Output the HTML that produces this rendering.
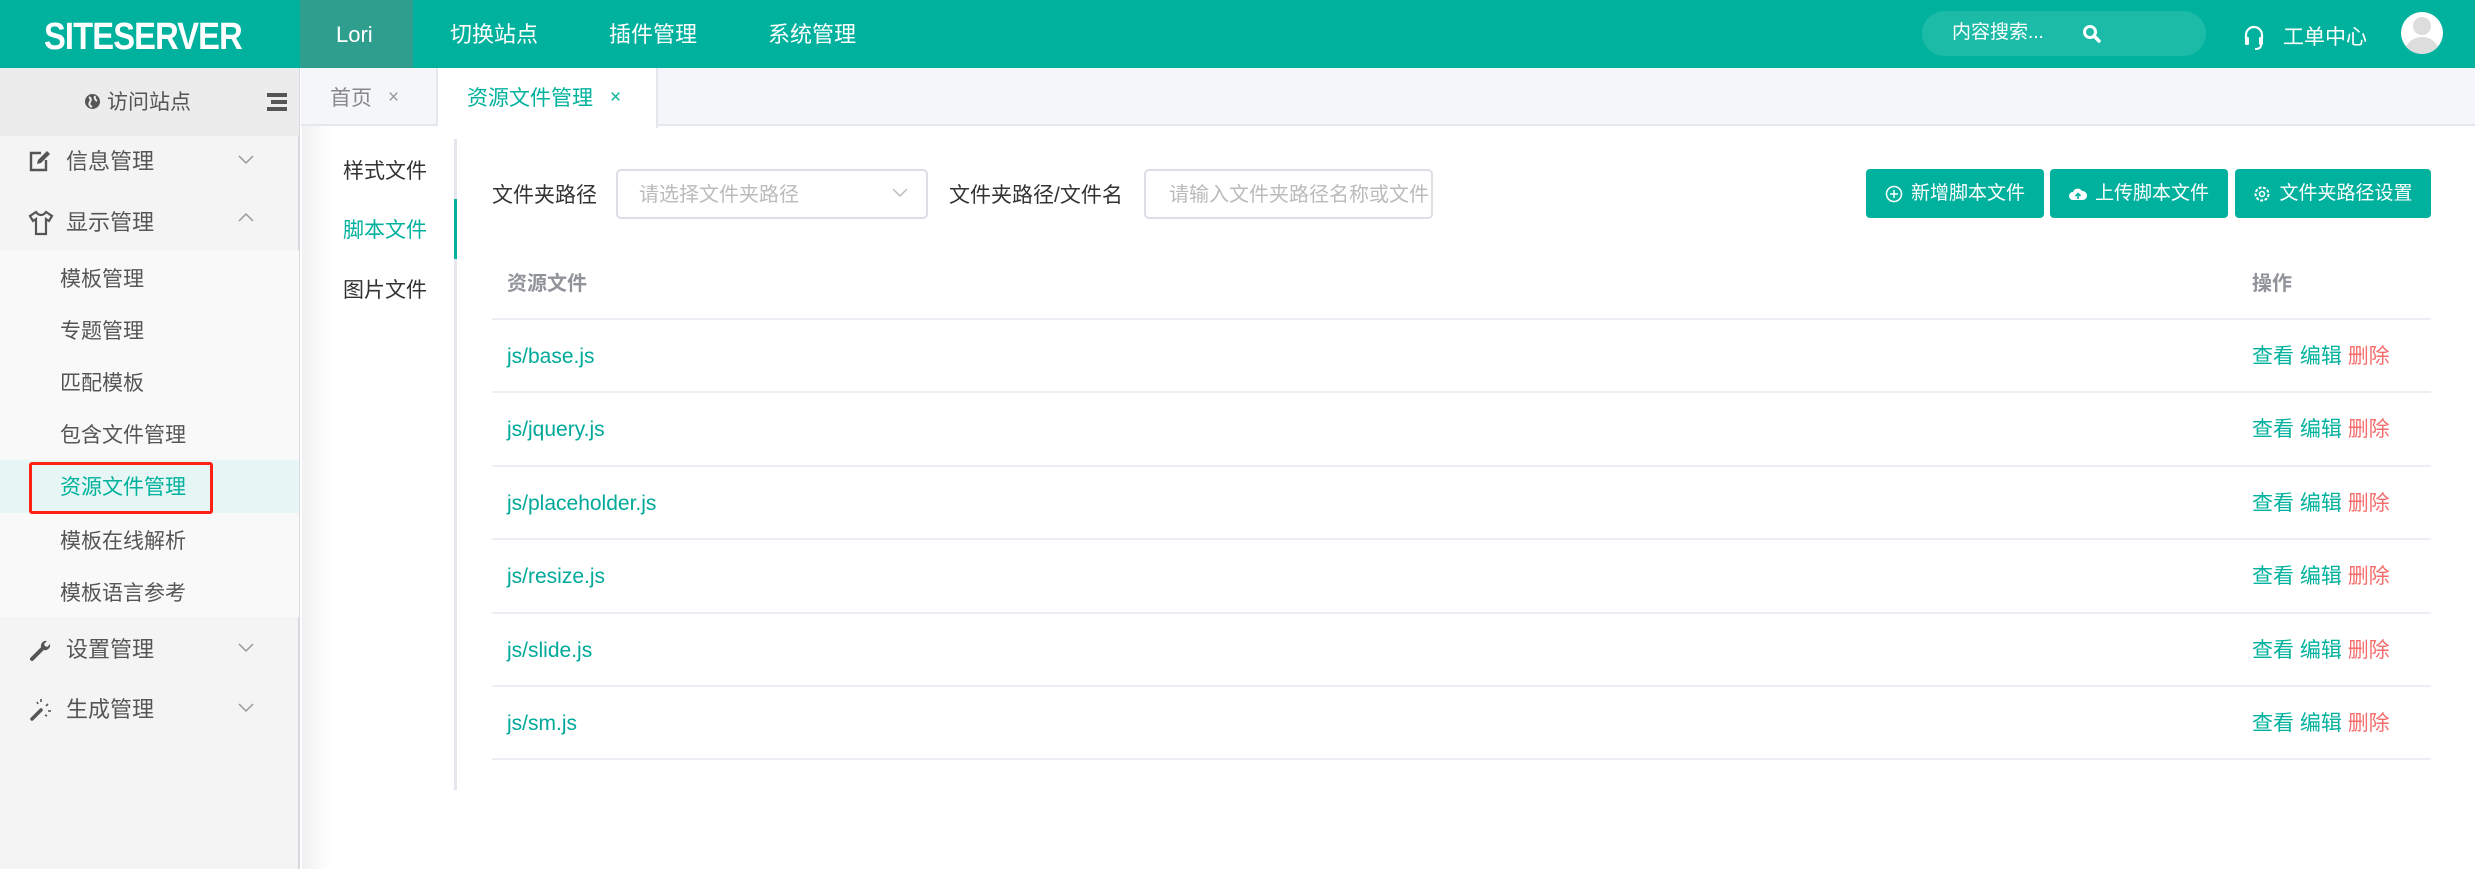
<!DOCTYPE html>
<html><head><meta charset="utf-8">
<style>
*{margin:0;padding:0;box-sizing:border-box}
body{width:2475px;height:869px;overflow:hidden;font-family:"Liberation Sans","Noto Sans CJK SC",sans-serif;background:#fff;position:relative;color:#333;line-height:30px}
.abs{position:absolute}
.hdr{left:0;top:0;width:2475px;height:68px;background:#00b19d}
.ht{color:#fff;font-size:22px;top:20px}
.side{left:0;top:68px;width:300px;height:801px;background:#f4f4f4;border-right:2px solid #d6d9e0}
.mi{font-size:22px;color:#555}
.sub{left:0;top:250px;width:299px;height:367px;background:#f9f9f9}
.tabs{left:301px;top:68px;width:2174px;height:58px;background:#f5f6fa;border-bottom:2px solid #e4e7ed}
.g{color:#00b19d}
.btn{top:169px;height:49px;background:#00b19d;border-radius:4px;color:#fff;font-size:19px;display:flex;align-items:center;justify-content:center;gap:8px;line-height:26px}
.row{left:492px;width:1939px;height:2px;background:#ebeef5}
.fn{left:507px;font-size:21px;color:#00a99a}
.op{left:2252px;font-size:21px}
</style></head><body>
<div class="abs hdr"></div>
<div class="abs" style="left:44px;top:17px;color:#fff;font-size:38px;line-height:40px;font-weight:bold;letter-spacing:-1px;transform:scaleX(0.86);transform-origin:left">SITESERVER</div>
<div class="abs" style="left:300px;top:0;width:113px;height:68px;background:#2f9e8f"></div>
<div class="abs ht" style="left:336px">Lori</div>
<div class="abs ht" style="left:450px">切换站点</div>
<div class="abs ht" style="left:609px">插件管理</div>
<div class="abs ht" style="left:768px">系统管理</div>
<div class="abs" style="left:1922px;top:11px;width:284px;height:45px;border-radius:23px;background:#1cbba8"></div>
<div class="abs" style="left:1952px;top:18px;color:#fff;font-size:19px">内容搜索...</div>
<svg class="abs" style="left:2082px;top:24px" width="20" height="20" viewBox="0 0 20 20"><circle cx="8" cy="8" r="5.5" stroke="#fff" stroke-width="3" fill="none"/><path d="M12 12l5 5" stroke="#fff" stroke-width="3.5" stroke-linecap="round"/></svg>
<svg class="abs" style="left:2243px;top:25px" width="22" height="26" viewBox="0 0 22 26"><path d="M3 14V10a8 8 0 0116 0v4" stroke="#fff" stroke-width="2.2" fill="none"/><rect x="2" y="12" width="4" height="8" rx="1.5" fill="#fff"/><rect x="16" y="12" width="4" height="8" rx="1.5" fill="#fff"/><path d="M18 20q0 4-6 4" stroke="#fff" stroke-width="2" fill="none"/></svg>
<div class="abs" style="left:2283px;top:23px;color:#fff;font-size:21px">工单中心</div>
<div class="abs" style="left:2401px;top:12px;width:42px;height:42px;border-radius:50%;background:#fff;overflow:hidden"><div class="abs" style="left:12px;top:5px;width:18px;height:18px;border-radius:50%;background:#ddd"></div><div class="abs" style="left:4px;top:25px;width:34px;height:30px;border-radius:50%;background:#ddd"></div></div>

<div class="abs side"></div>
<div class="abs" style="left:0;top:68px;width:299px;height:68px;background:#ececec"></div>
<svg class="abs" style="left:84px;top:93px" width="17" height="17" viewBox="0 0 17 17"><circle cx="8.5" cy="8.5" r="7.5" fill="#555"/><path d="M5 4q3 2 1 5t2 5M11 3q-1 3 2 5" stroke="#ececec" stroke-width="2" fill="none"/></svg>
<div class="abs mi" style="left:107px;top:88px;font-size:21px">访问站点</div>
<div class="abs" style="left:267px;top:93px;width:20px;height:4px;background:#555"></div>
<div class="abs" style="left:271px;top:100px;width:16px;height:4px;background:#555"></div>
<div class="abs" style="left:267px;top:107px;width:20px;height:4px;background:#555"></div>
<svg class="abs" style="left:29px;top:150px" width="22" height="22" viewBox="0 0 22 22"><path d="M12 3H2v17h15V10" stroke="#555" stroke-width="2.4" fill="none"/><path d="M8 14l1-4 9-9 3 3-9 9z" fill="#555"/></svg>
<div class="abs mi" style="left:66px;top:147px">信息管理</div>
<svg class="abs" style="left:238px;top:155px" width="16" height="10"><path d="M1 1l7 7 7-7" stroke="#999" stroke-width="1.5" fill="none"/></svg>
<svg class="abs" style="left:28px;top:210px" width="26" height="26" viewBox="0 0 26 26"><path d="M8 2l-6 4 3 5 3-2v15h10V9l3 2 3-5-6-4q-2 3-5 3t-5-3z" stroke="#555" stroke-width="2.2" fill="none"/></svg>
<div class="abs mi" style="left:66px;top:208px">显示管理</div>
<svg class="abs" style="left:238px;top:212px" width="16" height="10"><path d="M1 9l7-7 7 7" stroke="#999" stroke-width="1.5" fill="none"/></svg>
<div class="abs sub"></div>
<div class="abs" style="left:0;top:460px;width:299px;height:53px;background:#e6f6f4"></div>
<div class="abs mi" style="left:60px;top:265px;font-size:21px">模板管理</div>
<div class="abs mi" style="left:60px;top:317px;font-size:21px">专题管理</div>
<div class="abs mi" style="left:60px;top:369px;font-size:21px">匹配模板</div>
<div class="abs mi" style="left:60px;top:421px;font-size:21px">包含文件管理</div>
<div class="abs g" style="left:60px;top:473px;font-size:21px">资源文件管理</div>
<div class="abs" style="left:29px;top:462px;width:184px;height:52px;border:3px solid #ff2016;border-radius:3px"></div>
<div class="abs mi" style="left:60px;top:527px;font-size:21px">模板在线解析</div>
<div class="abs mi" style="left:60px;top:579px;font-size:21px">模板语言参考</div>
<svg class="abs" style="left:29px;top:638px" width="24" height="24" viewBox="0 0 24 24"><path d="M3 21l10-10" stroke="#555" stroke-width="4" stroke-linecap="round"/><path d="M13 11a5 5 0 015-8l-3 3 1 2 2 1 3-3a5 5 0 01-8 5z" fill="#555"/></svg>
<div class="abs mi" style="left:66px;top:635px">设置管理</div>
<svg class="abs" style="left:238px;top:643px" width="16" height="10"><path d="M1 1l7 7 7-7" stroke="#999" stroke-width="1.5" fill="none"/></svg>
<svg class="abs" style="left:29px;top:698px" width="24" height="24" viewBox="0 0 24 24"><path d="M3 21l9-9" stroke="#555" stroke-width="3.5" stroke-linecap="round"/><path d="M12 1v3M19 6l-2 2M22 13h-3M8 4l1 2M18 18l-2-1" stroke="#555" stroke-width="1.6"/></svg>
<div class="abs mi" style="left:66px;top:695px">生成管理</div>
<svg class="abs" style="left:238px;top:703px" width="16" height="10"><path d="M1 1l7 7 7-7" stroke="#999" stroke-width="1.5" fill="none"/></svg>

<div class="abs" style="left:302px;top:126px;width:30px;height:743px;background:linear-gradient(to right,#f1f1f1,#fff)"></div>
<div class="abs tabs"></div>
<div class="abs" style="left:436px;top:68px;width:2px;height:58px;background:#e4e7ed"></div>
<div class="abs" style="left:438px;top:68px;width:220px;height:60px;background:#fff;border-right:2px solid #e4e7ed"></div>
<div class="abs" style="left:330px;top:84px;font-size:21px;color:#888">首页</div>
<div class="abs" style="left:388px;top:83px;font-size:19px;color:#999">×</div>
<div class="abs g" style="left:467px;top:84px;font-size:21px">资源文件管理</div>
<div class="abs g" style="left:610px;top:83px;font-size:19px">×</div>

<div class="abs" style="left:343px;top:157px;font-size:21px;color:#333">样式文件</div>
<div class="abs g" style="left:343px;top:216px;font-size:21px">脚本文件</div>
<div class="abs" style="left:343px;top:276px;font-size:21px;color:#333">图片文件</div>
<div class="abs" style="left:454px;top:139px;width:3px;height:651px;background:#e4e7ed"></div>
<div class="abs" style="left:454px;top:199px;width:3px;height:60px;background:#00b19d"></div>

<div class="abs" style="left:492px;top:181px;font-size:21px;color:#333">文件夹路径</div>
<div class="abs" style="left:616px;top:169px;width:312px;height:50px;border:2px solid #dcdfe6;border-radius:5px"></div>
<div class="abs" style="left:639px;top:180px;font-size:20px;color:#bbb">请选择文件夹路径</div>
<svg class="abs" style="left:892px;top:188px" width="16" height="10"><path d="M1 1l7 7 7-7" stroke="#bbb" stroke-width="1.5" fill="none"/></svg>
<div class="abs" style="left:949px;top:181px;font-size:21px;color:#333">文件夹路径/文件名</div>
<div class="abs" style="left:1144px;top:169px;width:289px;height:50px;border:2px solid #dcdfe6;border-radius:5px;overflow:hidden"><div style="position:absolute;left:23px;top:9px;font-size:20px;color:#bbb;white-space:nowrap">请输入文件夹路径名称或文件</div></div>

<div class="abs btn" style="left:1866px;width:178px"><svg width="18" height="18"><circle cx="9" cy="9" r="7.5" stroke="#fff" stroke-width="1.5" fill="none"/><path d="M9 5v8M5 9h8" stroke="#fff" stroke-width="1.5"/></svg>新增脚本文件</div>
<div class="abs btn" style="left:2050px;width:178px"><svg width="18" height="16"><path d="M4 14a4 4 0 010-8 5 5 0 019-1 4 4 0 011 9z" fill="#fff"/><path d="M9 13V8M6.5 10L9 7.5l2.5 2.5" stroke="#00b19d" stroke-width="1.6" fill="none"/></svg>上传脚本文件</div>
<div class="abs btn" style="left:2235px;width:196px"><svg width="18" height="18"><circle cx="9" cy="9" r="6.5" stroke="#fff" stroke-width="2" fill="none" stroke-dasharray="3 1.5"/><circle cx="9" cy="9" r="2.5" stroke="#fff" stroke-width="1.5" fill="none"/></svg>文件夹路径设置</div>

<div class="abs" style="left:507px;top:269px;font-size:20px;color:#909399;font-weight:bold">资源文件</div>
<div class="abs" style="left:2252px;top:269px;font-size:20px;color:#909399;font-weight:bold">操作</div>
<div class="abs row" style="top:318px"></div>
<div class="abs fn" style="top:342px">js/base.js</div>
<div class="abs row" style="top:391px"></div>
<div class="abs fn" style="top:415px">js/jquery.js</div>
<div class="abs row" style="top:465px"></div>
<div class="abs fn" style="top:489px">js/placeholder.js</div>
<div class="abs row" style="top:538px"></div>
<div class="abs fn" style="top:562px">js/resize.js</div>
<div class="abs row" style="top:612px"></div>
<div class="abs fn" style="top:636px">js/slide.js</div>
<div class="abs row" style="top:685px"></div>
<div class="abs fn" style="top:709px">js/sm.js</div>
<div class="abs row" style="top:758px"></div>
<div class="abs op" style="top:342px"><span class="g">查看 编辑</span> <span style="color:#f56c6c">删除</span></div>
<div class="abs op" style="top:415px"><span class="g">查看 编辑</span> <span style="color:#f56c6c">删除</span></div>
<div class="abs op" style="top:489px"><span class="g">查看 编辑</span> <span style="color:#f56c6c">删除</span></div>
<div class="abs op" style="top:562px"><span class="g">查看 编辑</span> <span style="color:#f56c6c">删除</span></div>
<div class="abs op" style="top:636px"><span class="g">查看 编辑</span> <span style="color:#f56c6c">删除</span></div>
<div class="abs op" style="top:709px"><span class="g">查看 编辑</span> <span style="color:#f56c6c">删除</span></div>
</body></html>
